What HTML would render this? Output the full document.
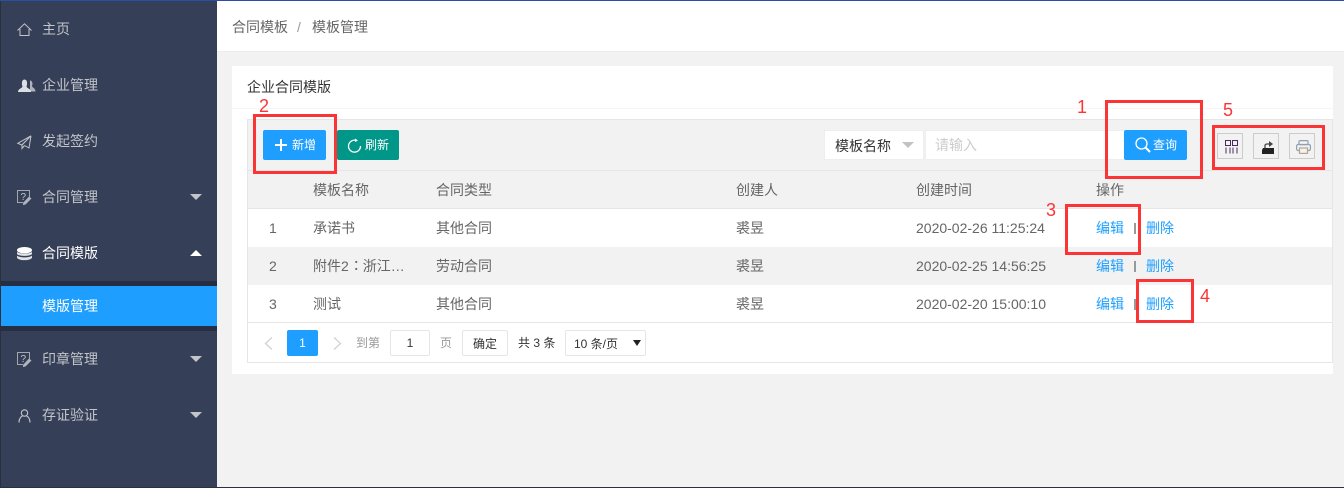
<!DOCTYPE html>
<html lang="zh"><head><meta charset="utf-8"><style>
*{box-sizing:border-box}
html,body{margin:0;padding:0;width:1344px;height:488px;overflow:hidden;background:#f2f2f2}
body{position:relative;font:14px/20px "Liberation Sans","Noto Sans CJK SC",sans-serif;color:#666}
.a,.t{position:absolute}
.t{white-space:nowrap;line-height:20px}
.r{position:absolute;border:3px solid #fb3535}
.n{position:absolute;color:#fb3535;font-size:18px;line-height:20px}
.s{color:#c2c5ca}
.l{color:#1e9fff}
svg{position:absolute;overflow:visible}
</style></head><body>
<div class="a" style="left:0;top:0;width:1344px;height:1px;background:#2a4ea6;z-index:5"></div>
<div class="a" style="left:217px;top:1px;width:1127px;height:51px;background:#fff;border-bottom:1px solid #ececec"></div>
<div class="a" style="left:0;top:0;width:217px;height:488px;background:#353f57;border-left:1px solid #2a3040"></div>
<div class="a" style="left:1px;top:281px;width:216px;height:50px;background:#262e43"></div>
<div class="a" style="left:1px;top:286px;width:216px;height:40px;background:#1e9fff"></div>
<div class="a" style="left:0;top:487px;width:1344px;height:1px;background:#2a3040"></div>

<div class="t s" style="left:42px;top:19px">主页</div>
<div class="t s" style="left:42px;top:75px">企业管理</div>
<div class="t s" style="left:42px;top:131px">发起签约</div>
<div class="t s" style="left:42px;top:187px">合同管理</div>
<div class="t" style="left:42px;top:243px;color:#fff">合同模版</div>
<div class="t" style="left:42px;top:296px;color:#fff">模版管理</div>
<div class="t s" style="left:42px;top:349px">印章管理</div>
<div class="t s" style="left:42px;top:405px">存证验证</div>

<svg style="left:17px;top:23px" width="15" height="13" fill="none" stroke="#c2c5ca" stroke-width="1"><path d="M.5 7.500L7.500.8l7 6.700M3 6v6.500h9V6"/></svg>
<svg style="left:18px;top:79px" width="18" height="14"><path d="M12 1.500c2.500 0 3 3.500 2 5.500 0 1.500 3.500 2 3.500 5.500H12z" fill="#aeb2bb"/><path d="M0 13c0-3.500 4-3.500 4.500-5.500C3.500 5 3.500 0.500 6.500.5s3 4.500 2 7c.5 2 4.500 2 4.500 5.500z" fill="#dcdee2"/></svg>
<svg style="left:17px;top:135px" width="15" height="14" fill="none" stroke="#c2c5ca" stroke-width="1"><path d="M14 .8L.8 8.300l4 1.700zM14 .8L12 13 7.500 10.500M14 .8L5 10v3.500l2.500-3"/></svg>
<svg style="left:17px;top:190px" width="15" height="15" fill="none" stroke="#a3a7b0"><path d="M12.500 7V.5H.5v12H6"/><path d="M6 13l6-6.500 2.500 2L8.500 14.500 6 15z" fill="#b0b4bc" stroke="none"/><text x="3.500" y="10" font-size="10" fill="#c2c5ca" stroke="none" font-family="Liberation Sans">?</text></svg>
<svg style="left:17px;top:247px" width="15" height="14" fill="#fff"><ellipse cx="7.500" cy="3.200" rx="7.500" ry="3.200"/><path d="M0 4.800c2 2.500 13 2.500 15 0v2.200c-2 2.500-13 2.500-15 0zM0 8.500c2 2.500 13 2.500 15 0v2.200c-2 3.300-13 3.300-15 0z" opacity=".85"/></svg>
<svg style="left:17px;top:352px" width="15" height="15" fill="none" stroke="#a3a7b0"><path d="M12.500 7V.5H.5v12H6"/><path d="M6 13l6-6.500 2.500 2L8.500 14.500 6 15z" fill="#b0b4bc" stroke="none"/><text x="3.500" y="10" font-size="10" fill="#c2c5ca" stroke="none" font-family="Liberation Sans">?</text></svg>
<svg style="left:18px;top:409px" width="13" height="14" fill="none" stroke="#c2c5ca" stroke-width="1.100"><circle cx="6.500" cy="4" r="3.200"/><path d="M1 13.500c0-4 2-6 3.500-6.500M12 13.500c0-4-2-6-3.500-6.500"/></svg>

<svg style="left:190px;top:194px" width="12" height="6"><path d="M0 0h12L6 6z" fill="#c2c5ca"/></svg>
<svg style="left:190px;top:250px" width="12" height="6"><path d="M0 6h12L6 0z" fill="#fff"/></svg>
<svg style="left:190px;top:356px" width="12" height="6"><path d="M0 0h12L6 6z" fill="#c2c5ca"/></svg>
<svg style="left:190px;top:412px" width="12" height="6"><path d="M0 0h12L6 6z" fill="#c2c5ca"/></svg>

<div class="t" style="left:232px;top:17px;color:#666">合同模板</div>
<div class="t" style="left:297px;top:17px;color:#999">/</div>
<div class="t" style="left:312px;top:17px;color:#666">模板管理</div>

<div class="a" style="left:232px;top:66px;width:1101px;height:308px;background:#fff"></div>
<div class="a" style="left:232px;top:108px;width:1101px;height:1px;background:#f6f6f6"></div>
<div class="t" style="left:247px;top:77px;color:#333">企业合同模版</div>

<div class="a" style="left:247px;top:119px;width:1086px;height:244px;border:1px solid #e6e6e6"></div>
<div class="a" style="left:248px;top:120px;width:1084px;height:51px;background:#f2f2f2;border-bottom:1px solid #e6e6e6"></div>
<div class="a" style="left:248px;top:171px;width:1084px;height:38px;background:#f2f2f2;border-bottom:1px solid #e6e6e6"></div>
<div class="a" style="left:248px;top:247px;width:1084px;height:38px;background:#f2f2f2"></div>
<div class="a" style="left:248px;top:322px;width:1084px;height:1px;background:#e6e6e6"></div>

<div class="a" style="left:263px;top:130px;width:63px;height:30px;background:#1e9fff;border-radius:2px"></div>
<svg style="left:275px;top:139px" width="12" height="12"><path d="M6 0v12M0 6h12" stroke="#fff" stroke-width="2"/></svg>
<div class="t" style="left:292px;top:135px;color:#fff;font-size:12px">新增</div>
<div class="a" style="left:337px;top:130px;width:62px;height:30px;background:#009688;border-radius:2px"></div>
<svg style="left:347px;top:138px" width="14" height="15" fill="none" stroke="#fff" stroke-width="1.300"><path d="M9.500 2.500A6 6 0 1 0 13.500 8"/><path d="M8 .5l3 2-3 1.500" fill="#fff" stroke="none"/></svg>
<div class="t" style="left:365px;top:135px;color:#fff;font-size:12px">刷新</div>

<div class="a" style="left:824px;top:130px;width:100px;height:30px;background:#fff;border:1px solid #eee"></div>
<div class="t" style="left:835px;top:136px;color:#333">模板名称</div>
<svg style="left:902px;top:142px" width="12" height="6"><path d="M0 0h12L6 6z" fill="#c2c2c2"/></svg>
<div class="a" style="left:925px;top:130px;width:199px;height:30px;background:#fff;border:1px solid #eee;border-right:0"></div>
<div class="t" style="left:935px;top:135px;color:#ccc">请输入</div>
<div class="a" style="left:1124px;top:130px;width:63px;height:30px;background:#1e9fff;border-radius:2px"></div>
<svg style="left:1135px;top:137px" width="16" height="16" fill="none" stroke="#fff" stroke-width="1.300"><circle cx="6.500" cy="6.500" r="5.500"/><path d="M10.500 10.500l4.500 4.500" stroke-width="2"/></svg>
<div class="t" style="left:1153px;top:135px;color:#fff;font-size:12px">查询</div>

<div class="a" style="left:1217px;top:133px;width:26px;height:26px;border:1px solid #ccc"></div>
<svg style="left:1225px;top:140px" width="13" height="13" fill="none" stroke="#4a2a5c" stroke-width="1"><path d="M.5.500h5v5h-5zM7.500.500h5v5h-5zM1 7.500v6M5 7.500v6M8 7.500v6M12 7.500v6"/></svg>
<div class="a" style="left:1253px;top:133px;width:26px;height:26px;border:1px solid #ccc"></div>
<svg style="left:1261px;top:140px" width="14" height="14"><path d="M1 10l1-2h11v6H1z" fill="#222"/><path d="M4 8V5.500c0-1 1-1.500 2-1.500h3" fill="none" stroke="#444" stroke-width="1.300"/><path d="M8 1l4 3-4 3z" fill="#444"/></svg>
<div class="a" style="left:1289px;top:133px;width:26px;height:26px;border:1px solid #ccc"></div>
<svg style="left:1296px;top:140px" width="15" height="14" fill="none" stroke="#8fa0b4" stroke-width="1.200"><rect x="3" y=".6" width="9" height="4" rx="1"/><rect x=".6" y="4.500" width="13.800" height="6" rx="1.500"/><rect x="3.500" y="8" width="8" height="5.400" fill="#f2f2f2" stroke="#b8a58a"/></svg>

<div class="t" style="left:313px;top:180px">模板名称</div>
<div class="t" style="left:436px;top:180px">合同类型</div>
<div class="t" style="left:736px;top:180px">创建人</div>
<div class="t" style="left:916px;top:180px">创建时间</div>
<div class="t" style="left:1096px;top:180px">操作</div>

<div class="t" style="left:269px;top:218px">1</div>
<div class="t" style="left:313px;top:218px">承诺书</div>
<div class="t" style="left:436px;top:218px">其他合同</div>
<div class="t" style="left:736px;top:218px">裘昱</div>
<div class="t" style="left:916px;top:218px">2020-02-26 11:25:24</div>
<div class="t l" style="left:1096px;top:218px">编辑</div>
<div class="a" style="left:1134px;top:223px;width:2px;height:11px;background:#999"></div>
<div class="t l" style="left:1146px;top:218px">删除</div>

<div class="t" style="left:269px;top:256px">2</div>
<div class="t" style="left:313px;top:256px">附件2<span style="display:inline-block;transform:translate(4px,-1px)">：</span>浙江…</div>
<div class="t" style="left:436px;top:256px">劳动合同</div>
<div class="t" style="left:736px;top:256px">裘昱</div>
<div class="t" style="left:916px;top:256px">2020-02-25 14:56:25</div>
<div class="t l" style="left:1096px;top:256px">编辑</div>
<div class="a" style="left:1134px;top:261px;width:2px;height:11px;background:#999"></div>
<div class="t l" style="left:1146px;top:256px">删除</div>

<div class="t" style="left:269px;top:294px">3</div>
<div class="t" style="left:313px;top:294px">测试</div>
<div class="t" style="left:436px;top:294px">其他合同</div>
<div class="t" style="left:736px;top:294px">裘昱</div>
<div class="t" style="left:916px;top:294px">2020-02-20 15:00:10</div>
<div class="t l" style="left:1096px;top:294px">编辑</div>
<div class="a" style="left:1134px;top:299px;width:2px;height:11px;background:#999"></div>
<div class="t l" style="left:1146px;top:294px">删除</div>

<svg style="left:264px;top:337px" width="9" height="13" fill="none" stroke="#d2d2d2" stroke-width="1.300"><path d="M8 .5L1.500 6.500 8 12.500"/></svg>
<div class="a" style="left:287px;top:330px;width:31px;height:26px;background:#1e9fff;border-radius:2px"></div>
<div class="t" style="left:287px;top:333px;width:31px;text-align:center;color:#fff;font-size:12px">1</div>
<svg style="left:333px;top:337px" width="9" height="13" fill="none" stroke="#d2d2d2" stroke-width="1.300"><path d="M1 .5l6.500 6L1 12.500"/></svg>
<div class="t" style="left:356px;top:333px;font-size:12px;color:#999">到第</div>
<div class="a" style="left:390px;top:330px;width:40px;height:26px;background:#fff;border:1px solid #e6e6e6;border-radius:2px"></div>
<div class="t" style="left:390px;top:333px;width:40px;text-align:center;font-size:12px;color:#333">1</div>
<div class="t" style="left:440px;top:333px;font-size:12px;color:#999">页</div>
<div class="a" style="left:462px;top:330px;width:46px;height:26px;background:#fff;border:1px solid #e6e6e6;border-radius:2px"></div>
<div class="t" style="left:462px;top:334px;width:46px;text-align:center;font-size:12px;color:#333">确定</div>
<div class="t" style="left:518px;top:333px;font-size:12px;color:#333">共 3 条</div>
<div class="a" style="left:565px;top:330px;width:81px;height:26px;background:#fff;border:1px solid #e6e6e6;border-radius:2px"></div>
<div class="t" style="left:574px;top:334px;font-size:12px;color:#333">10 条/页</div>
<svg style="left:633px;top:340px" width="8" height="6"><path d="M0 0h8L4 6z" fill="#222"/></svg>

<div class="r" style="left:1105px;top:100px;width:98px;height:79px"></div>
<div class="r" style="left:253px;top:114px;width:84px;height:60px"></div>
<div class="r" style="left:1065px;top:204px;width:76px;height:51px"></div>
<div class="r" style="left:1136px;top:279px;width:58px;height:44px"></div>
<div class="r" style="left:1212px;top:125px;width:113px;height:45px"></div>
<div class="n" style="left:1077px;top:97px">1</div>
<div class="n" style="left:259px;top:96px">2</div>
<div class="n" style="left:1046px;top:200px">3</div>
<div class="n" style="left:1200px;top:286px">4</div>
<div class="n" style="left:1223px;top:100px">5</div>
</body></html>
